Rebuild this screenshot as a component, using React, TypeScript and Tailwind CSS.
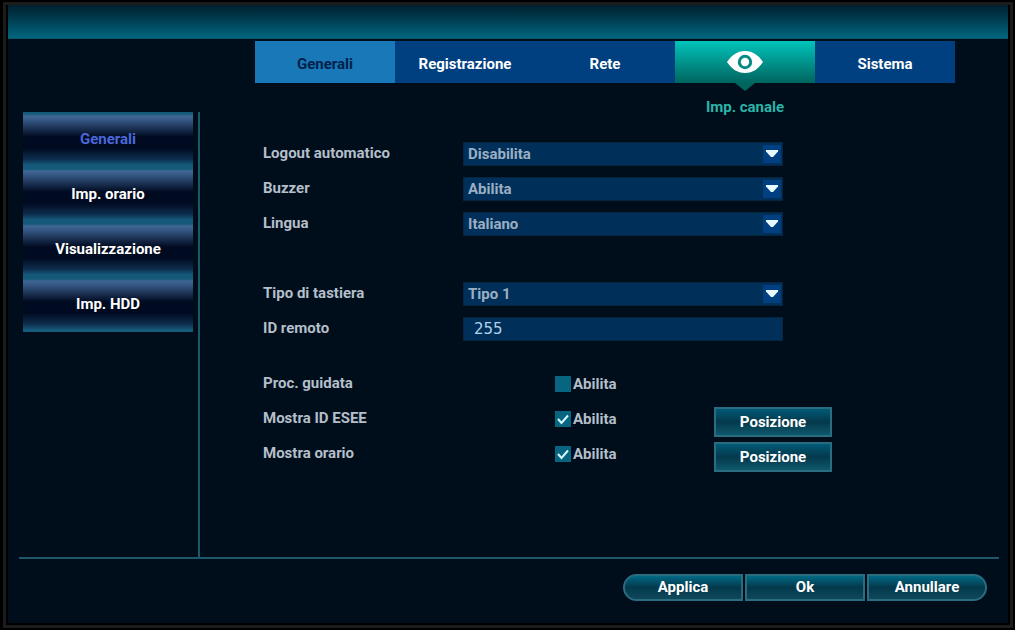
import { useState } from "react";

interface SelectRowProps {
    id: string;
    label: string;
    options: string[];
}

interface CheckRowProps {
    id: string;
    label: string;
    defaultChecked?: boolean;
}

const tabs = ["Generali", "Registrazione", "Rete", "Imp. canale", "Sistema"];
const sections = ["Generali", "Imp. orario", "Visualizzazione", "Imp. HDD"];

const EyeIcon = () => (
    <svg className="w-9 h-[22px]" viewBox="0 0 36 22" fill="none" aria-hidden="true">
        <path d="M0 11C5 4 10 0 18 0s13 4 18 11c-5 7-10 11-18 11S5 18 0 11Z" fill="#fff" />
        <circle cx="18" cy="11" r="7.2" fill="#078a84" />
        <circle cx="18" cy="11" r="4.2" fill="#fff" />
    </svg>
);

const SelectRow = ({ id, label, options }: SelectRowProps) => (
    <div className="flex h-[35px] items-center">
        <label htmlFor={id} className="w-[200px] shrink-0 pb-[2px]">
            {label}
        </label>
        <div className="relative w-80">
            <select
                id={id}
                className="block h-6 w-full appearance-none border border-[#08253f] bg-[#002f5a] pl-1 pr-6 leading-5 text-[#9aafc4] outline-none"
            >
                {options.map((option) => (
                    <option key={option}>{option}</option>
                ))}
            </select>
            <span className="pointer-events-none absolute right-[2px] top-[3px] flex h-[18px] w-[18px] items-center justify-center bg-[#004080]">
                <svg className="h-[7px] w-3" viewBox="0 0 12 7" aria-hidden="true">
                    <path d="M0 0h12v1.5L7 7H5L0 1.5Z" fill="#e8f8ff" />
                </svg>
            </span>
        </div>
    </div>
);

const CheckRow = ({ id, label, defaultChecked = false }: CheckRowProps) => {
    const [checked, setChecked] = useState(defaultChecked);

    return (
        <div className="flex h-[35px] items-center">
            <span className="w-[292px] shrink-0 pb-[2px]">{label}</span>
            <label htmlFor={id} className="flex items-center gap-[2px]">
                <span className="relative block h-4 w-4">
                    <input
                        id={id}
                        type="checkbox"
                        checked={checked}
                        onChange={(e) => setChecked(e.target.checked)}
                        className="block h-4 w-4 appearance-none bg-[#076580]"
                    />
                    {checked && (
                        <svg
                            className="pointer-events-none absolute inset-0 h-4 w-4"
                            viewBox="0 0 16 16"
                            fill="none"
                            aria-hidden="true"
                        >
                            <path d="M3 8l3.5 4L13 4.5" stroke="#d5f8ff" strokeWidth={2} />
                        </svg>
                    )}
                </span>
                Abilita
            </label>
        </div>
    );
};

const PositionButton = () => (
    <button className="h-[30px] w-[118px] border-2 border-[#2b6d80] bg-linear-to-b from-[#005a76] via-[#04394c] to-[#10586c] text-white">
        Posizione
    </button>
);

const App = () => {
    const [section, setSection] = useState("Generali");

    return (
        <div className="flex min-h-screen bg-black pt-[2px] pr-[2px] pb-[2px] pl-[3px] font-['Roboto',sans-serif] text-[15px] leading-5 font-bold text-[#b4bfca]">
            <div className="flex flex-1 border-[3px] border-[#1c1c1c] pr-[2px] pb-[2px] pl-[2px]">
                <div className="flex flex-1 flex-col bg-[#000e1c]">
                    <header className="h-[34px] border-b border-[#0d5568] bg-linear-to-b from-[#00202f] to-[#006780]" />

                    <nav className="mt-[2px] mr-[53px] ml-[247px] grid grid-cols-5">
                        {tabs.map((tab) => {
                            if (tab === "Imp. canale") {
                                return (
                                    <button
                                        key={tab}
                                        className="relative flex h-[42px] items-center justify-center bg-linear-to-b from-[#00c5bc] to-[#00655f]"
                                    >
                                        <EyeIcon />
                                        <span className="absolute inset-x-0 top-full flex flex-col items-center text-[#2bb5a8]">
                                            <svg className="h-2 w-5" viewBox="0 0 20 8" aria-hidden="true">
                                                <path d="M0 0h20L10 8Z" fill="#00655f" />
                                            </svg>
                                            <span className="mt-[6px]">{tab}</span>
                                        </span>
                                    </button>
                                );
                            }
                            return (
                                <button
                                    key={tab}
                                    className={`h-[42px] pt-1 ${tab === "Generali" ? "bg-[#1878b8] text-[#00214a]" : "bg-[#004080] text-white"
                                        }`}
                                >
                                    {tab}
                                </button>
                            );
                        })}
                    </nav>

                    <div className="mt-[29px] flex flex-1">
                        <aside className="ml-[15px] w-[177px] shrink-0 border-r-2 border-[#1c5868] pr-[5px]">
                            {sections.map((item) => (
                                <button
                                    key={item}
                                    onClick={() => setSection(item)}
                                    className={`block h-[55px] w-full bg-[linear-gradient(#145a78_0,#145a78_2px,#3f6795_4px,#33537f_9px,#000a20_25px,#000a20_36px,#0d2c4c_47px,#155a7a_53px)] pb-[2px] ${item === section ? "text-[#4a68dc]" : "text-white"
                                        }`}
                                >
                                    {item}
                                </button>
                            ))}
                        </aside>

                        <main className="ml-[63px] flex-1 pt-6">
                            <SelectRow id="logout" label="Logout automatico" options={["Disabilita", "Abilita"]} />
                            <SelectRow id="buzzer" label="Buzzer" options={["Abilita", "Disabilita"]} />
                            <SelectRow id="lingua" label="Lingua" options={["Italiano", "English"]} />

                            <div className="mt-[35px]">
                                <SelectRow id="tastiera" label="Tipo di tastiera" options={["Tipo 1", "Tipo 2"]} />
                                <div className="flex h-[35px] items-center">
                                    <label htmlFor="remoto" className="w-[200px] shrink-0 pb-[2px]">
                                        ID remoto
                                    </label>
                                    <input
                                        id="remoto"
                                        defaultValue="255"
                                        className="h-6 w-80 border border-[#08253f] bg-[#002f5a] px-[10px] font-['DejaVu_Sans',sans-serif] text-[15px] font-normal text-[#b0d4ec] outline-none"
                                    />
                                </div>
                            </div>

                            <div className="mt-5 flex">
                                <div className="w-[451px]">
                                    <CheckRow id="guidata" label="Proc. guidata" />
                                    <CheckRow id="esee" label="Mostra ID ESEE" defaultChecked />
                                    <CheckRow id="orario" label="Mostra orario" defaultChecked />
                                </div>
                                <div className="flex flex-col gap-[5px] pt-[41px]">
                                    <PositionButton />
                                    <PositionButton />
                                </div>
                            </div>
                        </main>
                    </div>

                    <footer className="mr-[9px] ml-[11px] flex h-[66px] justify-end gap-[2px] border-t-2 border-[#1c5868] pt-[15px] pr-3 text-white">
                        <button className="h-[27px] w-[120px] rounded-l-full border-2 border-[#2b6d80] bg-linear-to-b from-[#006984] via-[#04394c] to-[#10485c] pb-[2px]">
                            Applica
                        </button>
                        <button className="h-[27px] w-[120px] border-2 border-[#2b6d80] bg-linear-to-b from-[#006984] via-[#04394c] to-[#10485c] pb-[2px]">
                            Ok
                        </button>
                        <button className="h-[27px] w-[120px] rounded-r-full border-2 border-[#2b6d80] bg-linear-to-b from-[#006984] via-[#04394c] to-[#10485c] pb-[2px]">
                            Annullare
                        </button>
                    </footer>
                </div>
            </div>
        </div>
    );
};

export default App;
